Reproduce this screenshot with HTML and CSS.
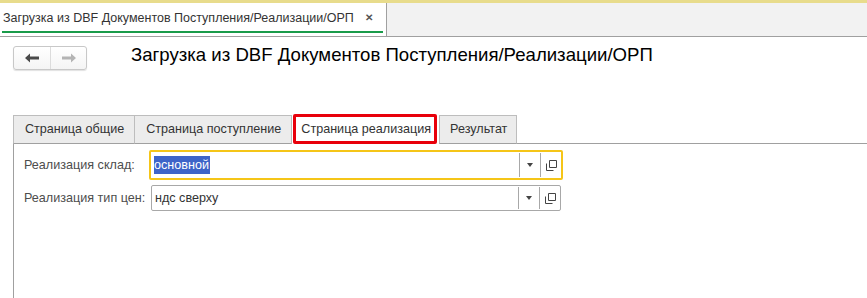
FILE: index.html
```html
<!DOCTYPE html>
<html lang="ru">
<head>
    <meta charset="UTF-8">
    <title>Загрузка из DBF</title>
    <link rel="stylesheet" href="styles.css">
</head>
<body>
    <div class="topbar">
        <div class="doc-tab">
            <span class="doc-tab-title">Загрузка из DBF Документов Поступления/Реализации/ОРП</span>
            <span class="doc-tab-close">&#x2715;</span>
        </div>
    </div>

    <div class="header">
        <div class="nav">
            <button class="nav-btn">
                <svg width="14" height="10" viewBox="0 0 14 10"><path d="M0 5 L5 0.5 V3.5 H14 V6.5 H5 V9.5 Z" fill="#4a4a4a"/></svg>
            </button>
            <button class="nav-btn">
                <svg width="14" height="10" viewBox="0 0 14 10"><path d="M14 5 L9 0.5 V3.5 H0 V6.5 H9 V9.5 Z" fill="#b4b4b4"/></svg>
            </button>
        </div>
        <h1>Загрузка из DBF Документов Поступления/Реализации/ОРП</h1>
    </div>

    <div class="tabs">
        <div class="tab">Страница общие</div>
        <div class="tab">Страница поступление</div>
        <div class="tab active">Страница реализация</div>
        <div class="tab">Результат</div>
        <div class="tabs-rest"></div>
    </div>

    <div class="panel">
        <div class="row">
            <label class="row-label">Реализация склад:</label>
            <div class="field focused">
                <span class="field-value"><span class="selected">основной</span></span>
                <span class="field-btn"><span class="caret"></span></span>
                <span class="field-btn">
                    <svg width="11" height="11" viewBox="0 0 11 11"><path d="M3.5 0.5 H10.5 V7.5 H3.5 Z M0.5 3.5 V10.5 H7.5" fill="none" stroke="#444" stroke-width="1"/></svg>
                </span>
            </div>
        </div>
        <div class="row">
            <label class="row-label">Реализация тип цен:</label>
            <div class="field">
                <span class="field-value">ндс сверху</span>
                <span class="field-btn"><span class="caret"></span></span>
                <span class="field-btn">
                    <svg width="11" height="11" viewBox="0 0 11 11"><path d="M3.5 0.5 H10.5 V7.5 H3.5 Z M0.5 3.5 V10.5 H7.5" fill="none" stroke="#444" stroke-width="1"/></svg>
                </span>
            </div>
        </div>
    </div>
</body>
</html>
```

FILE: styles.css
```css
body {
    margin: 0;
    font-family: Arial, "Liberation Sans", sans-serif;
    font-size: 12.6px;
    color: #4d4d4d;
    background-color: #fff;
    height: 298px;
    overflow: hidden;
}
.topbar {
    border-top: 3px solid #e8dc8c;
    background-color: #f2f2f2;
    border-bottom: 1px solid #a0a0a0;
    height: 33px;
    display: flex;
}
.doc-tab {
    background-color: #fff;
    border-right: 1px solid #a0a0a0;
    width: 387px;
    padding: 0 0 0 3px;
    box-sizing: border-box;
    display: flex;
    align-items: center;
    position: relative;
    height: 33px;
    white-space: nowrap;
}
.doc-tab::after {
    content: "";
    position: absolute;
    left: 2px;
    right: 3px;
    bottom: 3px;
    height: 2px;
    background-color: #1a9b4a;
}
.doc-tab-title {
    color: #333;
    font-size: 12.5px;
    margin-top: -4px;
}
.doc-tab-close {
    margin-left: 11px;
    margin-top: -4px;
    font-size: 10px;
    font-weight: bold;
    color: #555;
}
.header {
    display: flex;
    align-items: center;
    padding: 8px 0 0 13px;
    height: 25px;
}
.nav {
    display: flex;
    border: 1px solid #c8c8c8;
    border-radius: 3px;
    box-shadow: 0 1px 1px rgba(0, 0, 0, 0.12);
    background: linear-gradient(#fff, #f4f4f4);
}
.nav-btn {
    width: 36px;
    height: 22px;
    border: none;
    background: none;
    padding: 0;
    display: flex;
    align-items: center;
    justify-content: center;
}
.nav-btn + .nav-btn {
    border-left: 1px solid #dcdcdc;
}
h1 {
    margin: 0 0 0 44px;
    font-size: 18.6px;
    font-weight: normal;
    color: #000;
    position: relative;
    top: -3px;
}
.tabs {
    display: flex;
    align-items: flex-end;
    margin-top: 44px;
    padding-left: 13px;
    height: 30px;
}
.tab {
    height: 27px;
    line-height: 27px;
    padding: 0 10px 0 11px;
    background-color: #ececec;
    border: 1px solid #bdbdbd;
    border-bottom: 1px solid #a0a0a0;
    border-right: none;
    color: #333;
}
.tab:nth-child(2) {
    border-right: 1px solid #bdbdbd;
}
.tab.active {
    background-color: #fff;
    border: 3px solid #e8000b;
    border-radius: 2px;
    height: 24px;
    line-height: 24px;
    padding: 0 3px 0 5px;
    margin-left: 1px;
}
.tab.active + .tab {
    margin-left: 2px;
    border-right: 1px solid #bdbdbd;
    padding: 0 9px 0 10px;
}
.tabs-rest {
    flex: 1;
    border-bottom: 1px solid #a0a0a0;
}
.panel {
    margin-left: 13px;
    border-left: 1px solid #a0a0a0;
    padding: 6px 0 0 10px;
    height: 160px;
}
.row {
    display: flex;
    align-items: center;
    margin-bottom: 5px;
}
.row-label {
    width: 125px;
    color: #4d4d4d;
}
.field {
    display: flex;
    align-items: stretch;
    width: 408px;
    height: 24px;
    border: 1px solid #a8a8a8;
    border-radius: 2px;
    background-color: #fff;
    margin-left: 2px;
}
.field.focused {
    border: 2px solid #f5c518;
    height: 26px;
    width: 410px;
    margin-left: 0;
}
.field-value {
    flex: 1;
    display: flex;
    align-items: center;
    padding-left: 3px;
    color: #333;
}
.selected {
    background-color: #3e64c8;
    color: #fff;
    padding: 2px 1px 2px 0;
}
.field-btn {
    width: 20px;
    border-left: 1px solid #a8a8a8;
    display: flex;
    align-items: center;
    justify-content: center;
    margin: 1px 0;
}
.caret {
    width: 0;
    height: 0;
    border-left: 3px solid transparent;
    border-right: 3px solid transparent;
    border-top: 4px solid #444;
}
```
